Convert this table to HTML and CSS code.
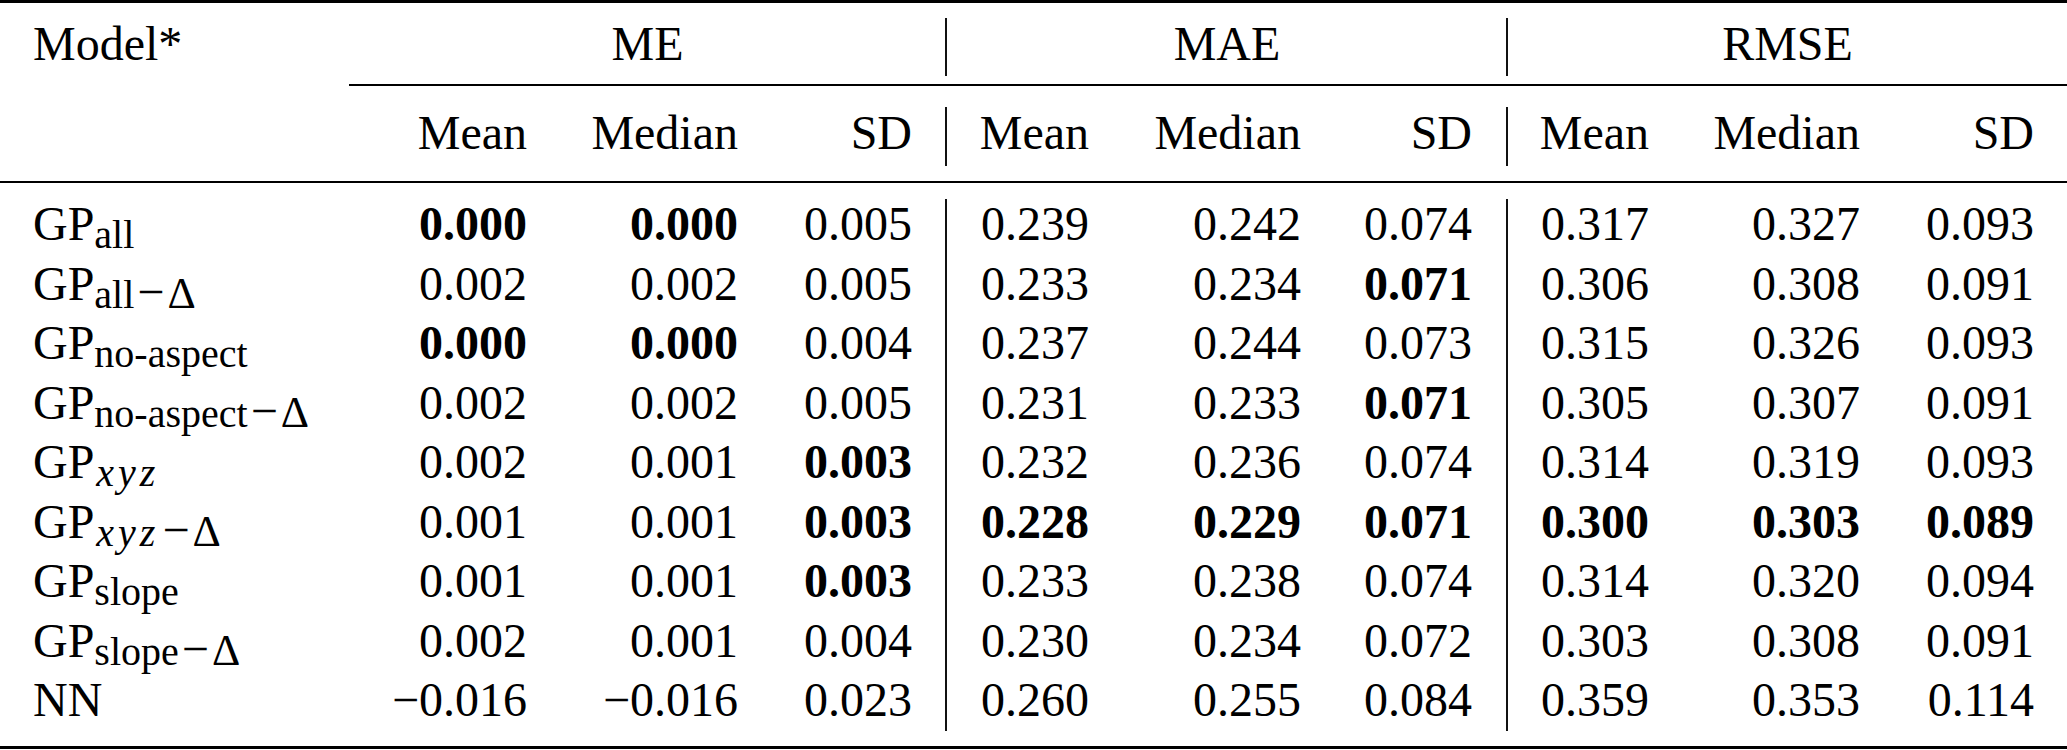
FILE: index.html
```html
<!DOCTYPE html>
<html>
<head>
<meta charset="utf-8">
<link rel="stylesheet" href="styles.css">
</head>
<body>
<div class="table">
  <div class="rule rule-top"></div>
  <div class="row head1">
    <div class="c lbl">Model*</div>
    <div class="c grp">ME</div>
    <div class="c grp vl">MAE</div>
    <div class="c grp vl">RMSE</div>
  </div>
  <div class="cmid"></div>
  <div class="row head2">
    <div class="c lbl"></div>
    <div class="c">Mean</div><div class="c">Median</div><div class="c pr1">SD</div>
    <div class="c vl">Mean</div><div class="c">Median</div><div class="c pr2">SD</div>
    <div class="c vl">Mean</div><div class="c">Median</div><div class="c pr3">SD</div>
  </div>
  <div class="rule rule-mid"></div>
  <div class="body">
    <div class="row">
      <div class="c lbl">GP<sub>all</sub></div>
      <div class="c"><b>0.000</b></div><div class="c"><b>0.000</b></div><div class="c pr1">0.005</div>
      <div class="c vl">0.239</div><div class="c">0.242</div><div class="c pr2">0.074</div>
      <div class="c vl">0.317</div><div class="c">0.327</div><div class="c pr3">0.093</div>
    </div>
    <div class="row">
      <div class="c lbl">GP<sub>all<span class="op">−</span><span class="dl">Δ</span></sub></div>
      <div class="c">0.002</div><div class="c">0.002</div><div class="c pr1">0.005</div>
      <div class="c vl">0.233</div><div class="c">0.234</div><div class="c pr2"><b>0.071</b></div>
      <div class="c vl">0.306</div><div class="c">0.308</div><div class="c pr3">0.091</div>
    </div>
    <div class="row">
      <div class="c lbl">GP<sub>no-aspect</sub></div>
      <div class="c"><b>0.000</b></div><div class="c"><b>0.000</b></div><div class="c pr1">0.004</div>
      <div class="c vl">0.237</div><div class="c">0.244</div><div class="c pr2">0.073</div>
      <div class="c vl">0.315</div><div class="c">0.326</div><div class="c pr3">0.093</div>
    </div>
    <div class="row">
      <div class="c lbl">GP<sub>no-aspect<span class="op">−</span><span class="dl">Δ</span></sub></div>
      <div class="c">0.002</div><div class="c">0.002</div><div class="c pr1">0.005</div>
      <div class="c vl">0.231</div><div class="c">0.233</div><div class="c pr2"><b>0.071</b></div>
      <div class="c vl">0.305</div><div class="c">0.307</div><div class="c pr3">0.091</div>
    </div>
    <div class="row">
      <div class="c lbl">GP<sub><i>xyz</i></sub></div>
      <div class="c">0.002</div><div class="c">0.001</div><div class="c pr1"><b>0.003</b></div>
      <div class="c vl">0.232</div><div class="c">0.236</div><div class="c pr2">0.074</div>
      <div class="c vl">0.314</div><div class="c">0.319</div><div class="c pr3">0.093</div>
    </div>
    <div class="row">
      <div class="c lbl">GP<sub><i>xyz</i><span class="op">−</span><span class="dl">Δ</span></sub></div>
      <div class="c">0.001</div><div class="c">0.001</div><div class="c pr1"><b>0.003</b></div>
      <div class="c vl"><b>0.228</b></div><div class="c"><b>0.229</b></div><div class="c pr2"><b>0.071</b></div>
      <div class="c vl"><b>0.300</b></div><div class="c"><b>0.303</b></div><div class="c pr3"><b>0.089</b></div>
    </div>
    <div class="row">
      <div class="c lbl">GP<sub>slope</sub></div>
      <div class="c">0.001</div><div class="c">0.001</div><div class="c pr1"><b>0.003</b></div>
      <div class="c vl">0.233</div><div class="c">0.238</div><div class="c pr2">0.074</div>
      <div class="c vl">0.314</div><div class="c">0.320</div><div class="c pr3">0.094</div>
    </div>
    <div class="row">
      <div class="c lbl">GP<sub>slope<span class="op">−</span><span class="dl">Δ</span></sub></div>
      <div class="c">0.002</div><div class="c">0.001</div><div class="c pr1">0.004</div>
      <div class="c vl">0.230</div><div class="c">0.234</div><div class="c pr2">0.072</div>
      <div class="c vl">0.303</div><div class="c">0.308</div><div class="c pr3">0.091</div>
    </div>
    <div class="row row-last">
      <div class="c lbl">NN</div>
      <div class="c">−0.016</div><div class="c">−0.016</div><div class="c pr1">0.023</div>
      <div class="c vl">0.260</div><div class="c">0.255</div><div class="c pr2">0.084</div>
      <div class="c vl">0.359</div><div class="c">0.353</div><div class="c pr3">0.114</div>
    </div>
  </div>
  <div class="rule rule-bottom"></div>
</div>
</body>
</html>
```
FILE: styles.css
```css
html, body {
  margin: 0;
  padding: 0;
  background: #ffffff;
}
body {
  font-family: "Liberation Serif", "Times New Roman", serif;
  font-size: 48px;
  color: #000000;
  width: 2067px;
  height: 750px;
  overflow: hidden;
}
.table {
  width: 2067px;
}
.rule {
  background: #000000;
  width: 100%;
}
.rule-top {
  height: 3px;
}
.rule-mid {
  height: 2px;
  margin-top: 15px;
}
.rule-bottom {
  height: 3px;
  margin-top: 15px;
}
.cmid {
  height: 2px;
  background: #000000;
  margin-top: 8px;
  margin-left: 349px;
}
.row {
  display: grid;
  grid-template-columns: 349px 178px 211px 208px 143px 212px 206px 142px 211px 207px;
  height: 59.5px;
  line-height: 50px;
}
.row-last {
  height: 56px;
}
.head1 {
  grid-template-columns: 349px 597px 561px 560px;
  margin-top: 15px;
  height: 58px;
  line-height: 51px;
}
.head2 {
  margin-top: 21px;
  height: 59px;
  line-height: 52px;
}
.body {
  margin-top: 16px;
}
.c {
  text-align: right;
  white-space: nowrap;
  box-sizing: border-box;
}
.lbl {
  text-align: left;
  padding-left: 33px;
}
.grp {
  text-align: center;
}
.vl {
  border-left: 2px solid #111111;
  margin-left: -1px;
}
.pr1 {
  padding-right: 34px;
}
.pr2 {
  padding-right: 35px;
}
.pr3 {
  padding-right: 33px;
}
b {
  font-weight: bold;
}
sub {
  font-size: 40px;
  vertical-align: -8px;
  line-height: 0;
}
sub i {
  font-style: italic;
  letter-spacing: 4px;
  margin-left: 2px;
}
.op {
  font-size: 48px;
  margin: 0 3px 0 3px;
}
.dl {
  font-size: 44px;
}
```
